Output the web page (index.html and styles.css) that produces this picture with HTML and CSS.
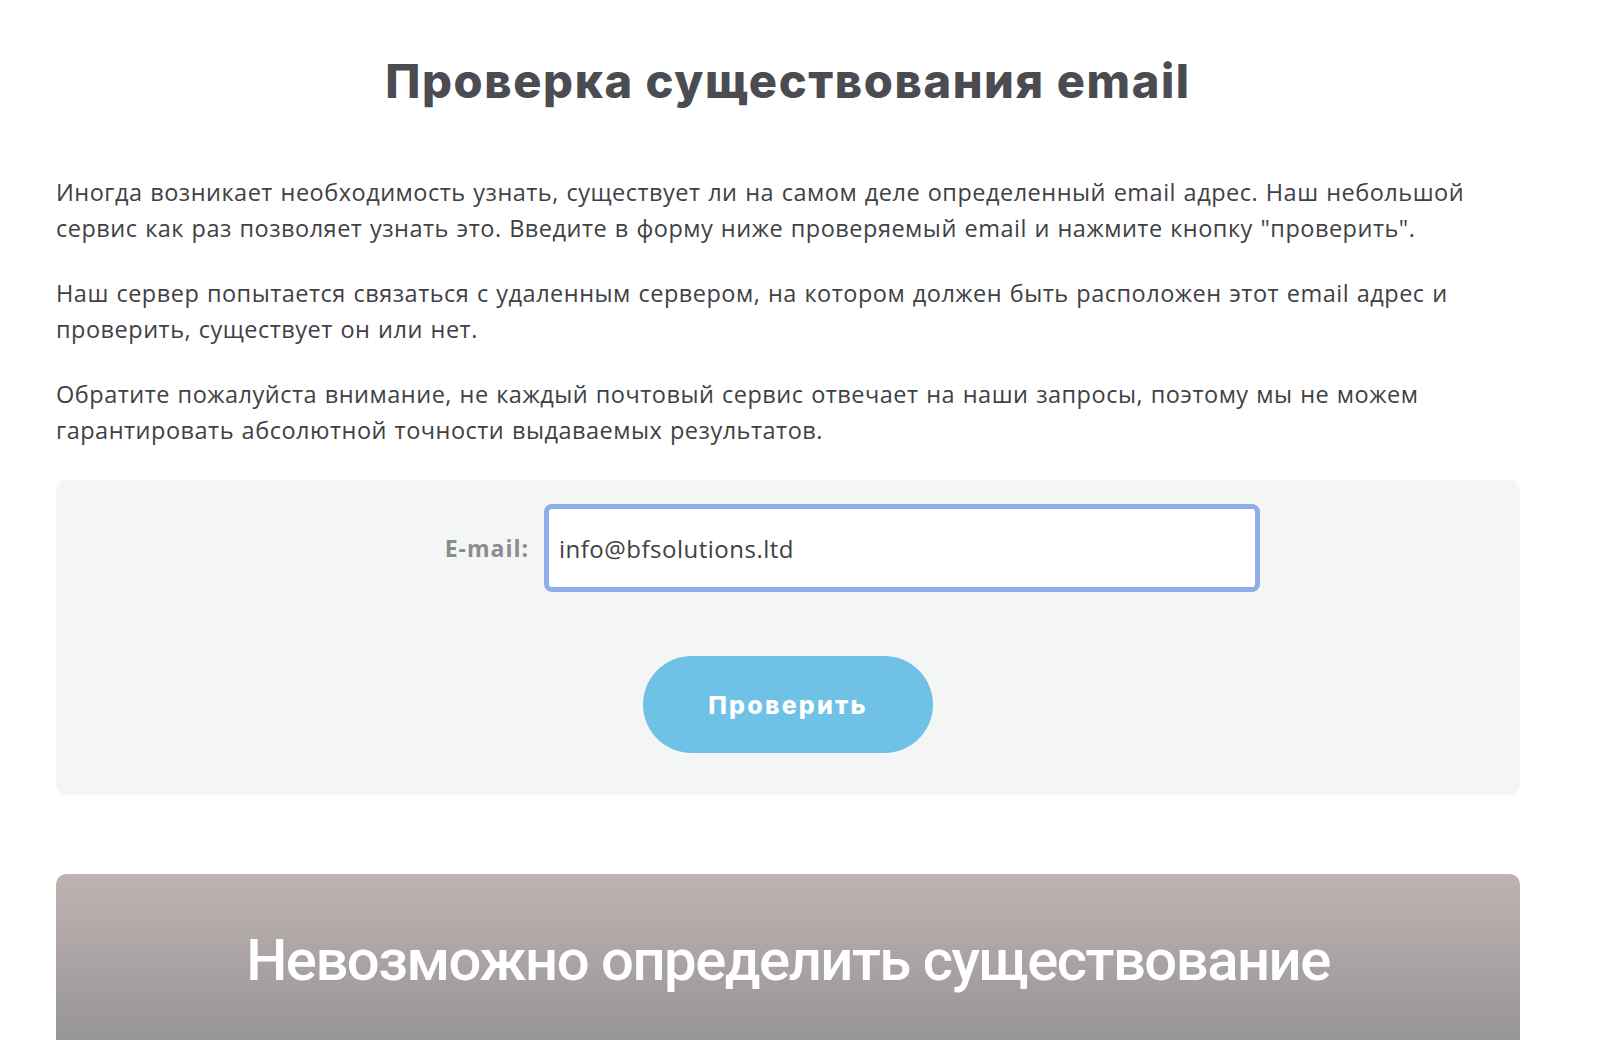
FILE: index.html
```html
<!DOCTYPE html>
<html lang="ru">
<head>
  <meta charset="UTF-8">
  <meta name="viewport" content="width=device-width, initial-scale=1.0">
  <title>Проверка существования email</title>
  <link rel="stylesheet" href="styles.css">
</head>
<body>
  <div class="page">
    <h1 class="title">Проверка существования email</h1>

    <div class="intro">
      <p>Иногда возникает необходимость узнать, существует ли на самом деле определенный email адрес. Наш небольшой сервис как раз позволяет узнать это. Введите в форму ниже проверяемый email и нажмите кнопку "проверить".</p>
      <p>Наш сервер попытается связаться с удаленным сервером, на котором должен быть расположен этот email адрес и проверить, существует он или нет.</p>
      <p>Обратите пожалуйста внимание, не каждый почтовый сервис отвечает на наши запросы, поэтому мы не можем гарантировать абсолютной точности выдаваемых результатов.</p>
    </div>

    <form class="check-form">
      <div class="field-row">
        <label for="email">E-mail:</label>
        <input type="text" id="email" class="email-input" value="info@bfsolutions.ltd">
      </div>
      <button type="button" class="check-btn">Проверить</button>
    </form>

    <div class="result">
      <h2>Невозможно определить существование</h2>
    </div>
  </div>
</body>
</html>
```

FILE: styles.css
```css
* {
  margin: 0;
  padding: 0;
  box-sizing: border-box;
}

body {
  font-family: "Open Sans", Lato, sans-serif;
  background-color: #fff;
  color: #3f4145;
}

.page {
  width: 1464px;
  margin-left: 56px;
  padding-top: 52px;
}

.title {
  font-family: Inter, "Open Sans", sans-serif;
  font-weight: 800;
  font-size: 47px;
  line-height: 58px;
  color: #4a4c51;
  text-align: center;
  letter-spacing: 1.6px;
}

.intro {
  margin-top: 64px;
  display: flex;
  flex-direction: column;
  gap: 29px;
}

.intro p {
  font-size: 23.5px;
  line-height: 36px;
  font-weight: 500;
  letter-spacing: 0.5px;
  word-spacing: 1px;
}

.check-form {
  margin-top: 32px;
  background-color: #f4f5f5;
  border-radius: 10px;
  padding: 24px 0 42px;
  display: flex;
  flex-direction: column;
  align-items: center;
}

.field-row {
  align-self: stretch;
  display: flex;
  align-items: center;
}

.field-row label {
  width: 488px;
  padding-right: 15px;
  text-align: right;
  font-size: 23px;
  font-weight: 700;
  letter-spacing: 1px;
  color: #8b8c8d;
}

.email-input {
  width: 716px;
  height: 88px;
  border: 5px solid #8fadea;
  border-radius: 8px;
  background: #fff;
  padding: 0 10px;
  font-family: "Open Sans", sans-serif;
  font-size: 24px;
  letter-spacing: 0.5px;
  color: #3f4145;
  outline: none;
}

.check-btn {
  margin-top: 64px;
  width: 290px;
  height: 97px;
  border: none;
  border-radius: 49px;
  background-color: #6fc1e6;
  color: #fff;
  font-family: Inter, sans-serif;
  font-weight: 800;
  font-size: 25px;
  letter-spacing: 2.2px;
  cursor: pointer;
}

.result {
  margin-top: 79px;
  height: 250px;
  border-radius: 10px 10px 0 0;
  background: linear-gradient(#c0b3b2 0, #979596 165px, #8f8e8f 100%);
  padding-top: 50px;
  text-align: center;
}

.result h2 {
  font-family: Roboto, sans-serif;
  font-weight: 500;
  font-size: 58px;
  line-height: 72px;
  letter-spacing: -1.5px;
  color: #fff;
}
```
